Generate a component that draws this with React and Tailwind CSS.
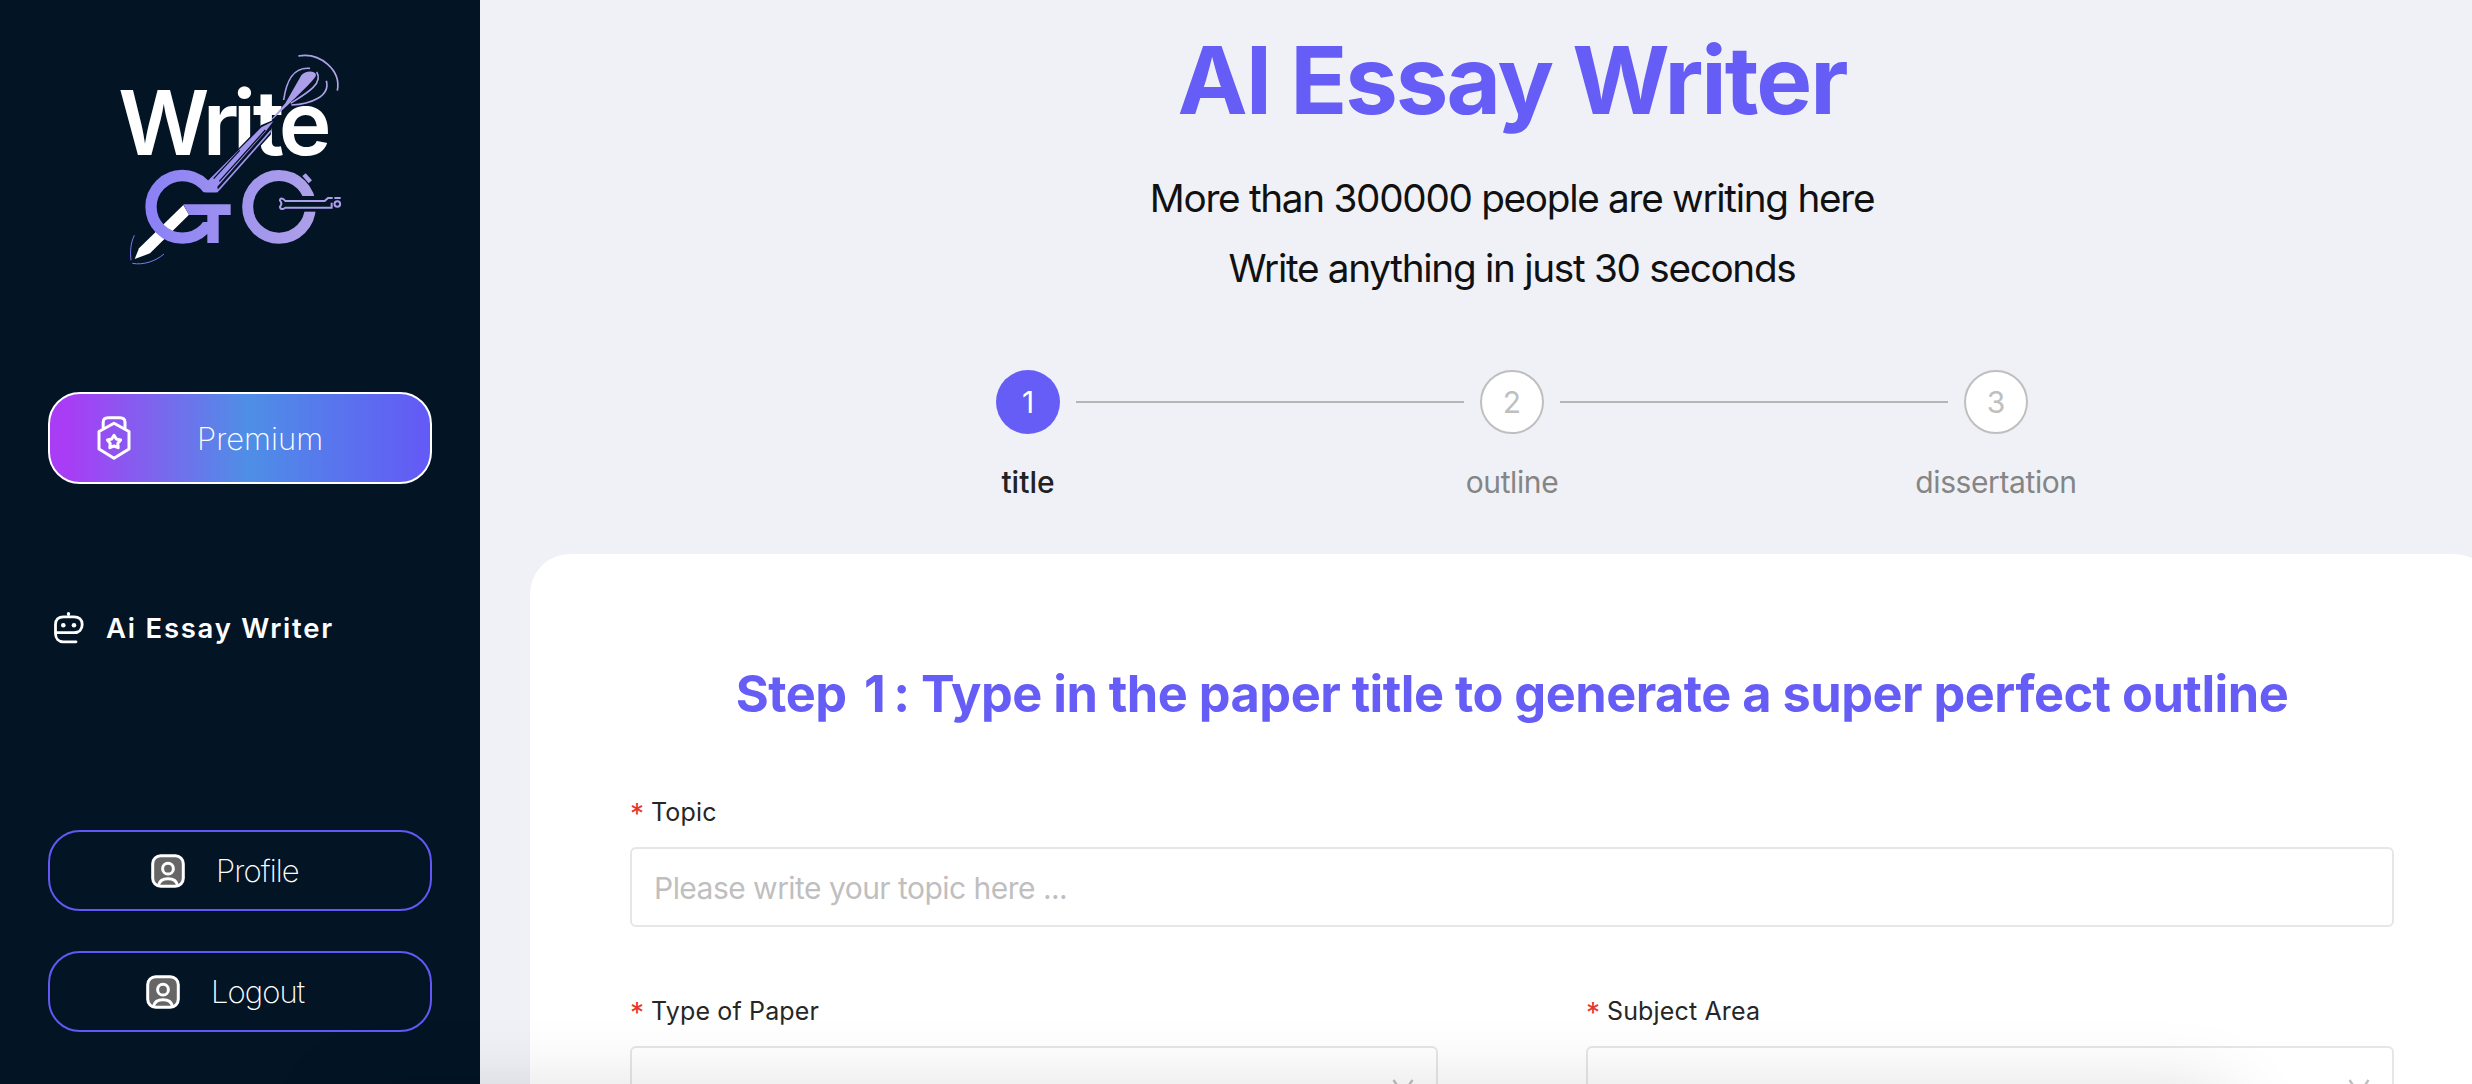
import { useState } from "react";
import clsx from "clsx";

const steps = [
  { id: 1, label: "title" },
  { id: 2, label: "outline" },
  { id: 3, label: "dissertation" },
];

function Logo() {
  return (
    <svg viewBox="0 0 780 720" className="w-[260px] h-[240px]" fill="none">
      <defs>
        <linearGradient id="violet" gradientUnits="userSpaceOnUse" x1="130" y1="0" x2="720" y2="0">
          <stop offset="0" stopColor="#8a7ff6" />
          <stop offset="0.5" stopColor="#a094ee" />
          <stop offset="1" stopColor="#b2a5e6" />
        </linearGradient>
      </defs>
      <text x="55 308 398 458 536" y="345" fill="#fff" fontFamily="Inter, sans-serif" fontWeight="600" fontSize="268">Write</text>

      {/* sword blade */}
      <path d="M250 495L267 524L150 640L104 657L117 625Z" fill="#fff" />

      {/* rings */}
      <circle cx="247" cy="500.500" r="94" stroke="url(#violet)" strokeWidth="34" />
      <circle cx="537" cy="500.500" r="94" stroke="url(#violet)" strokeWidth="33" />
      <rect x="296" y="457" width="64" height="89" fill="#031425" />
      <rect x="598" y="468" width="56" height="47" fill="#031425" />
      <path d="M250 493H392V525H356V609H322V525H267Z" fill="url(#violet)" />

      {/* grip and its stripes */}
      <path d="M326 418L484 255L520 240L512 284L362 452L350 457Z" fill="#031425" />
      <path d="M322 424L484 262L520 244L494 278L352 440L355 457H318Z" fill="url(#violet)" />
      <path d="M341 416L419 331M358 424L496 270" stroke="#031425" strokeWidth="4" />
      <path d="M354 452L513 272" stroke="url(#violet)" strokeWidth="5" />

      {/* feather */}
      <path d="M514 238L556 190L604 106C614 92 644 90 648 104C650 116 576 182 518 238Z" fill="url(#violet)" />
      <g stroke="url(#violet)" strokeWidth="5">
        <path d="M551 180C558 130 575 80 630 85" />
        <path d="M650 96C672 130 620 160 572 190" />
        <path d="M679 122C692 170 630 192 574 195" />
        <path d="M595 48C660 36 724 90 712 152" />
      </g>
      <g stroke="#8077ee" strokeWidth="3">
        <path d="M103 586C92 608 90 635 93 661" />
        <path d="M97 670C130 676 166 664 192 642" />
      </g>

      {/* pommel */}
      <path d="M607 408L617 400L636 421L626 430Z" fill="url(#violet)" />
      <g stroke="#ab9eea" strokeWidth="6">
        <path d="M698 474H684L674 483H556C548 472 539 474 540 482C546 489 546 494 540 500C540 508 550 509 556 503H695V488" />
        <path d="M703 474H722" />
        <circle cx="712" cy="492" r="8.500" />
      </g>
    </svg>
  );
}

function MedalIcon() {
  return (
    <svg viewBox="0 0 34 44" className="w-[34px] h-11" fill="none" stroke="#fff" strokeWidth="3" strokeLinejoin="round" strokeLinecap="round">
      <path d="M6.200 12V6.500C6.200 3.500 8 1.700 11 1.700H23C26 1.700 28 3.500 28 6.500V12" />
      <path d="M17 7.300L32 15.500V33L17 42.200L2 33V15.500Z" />
      <path d="M17 19.300L19.300 23L23.600 24L20.800 27.400L21.200 31.700L17 30L12.800 31.700L13.200 27.400L10.400 24L14.700 23Z" />
    </svg>
  );
}

function RobotIcon() {
  return (
    <svg viewBox="0 0 30 32" className="w-[30px] h-8" fill="none" stroke="#fff" strokeWidth="2.800" strokeLinecap="round">
      <path d="M22 29.800H9.500C4.500 29.800 1.500 26.500 1.500 21.500V12.500C1.500 7.500 4.500 4.800 9.500 4.800H20C25 4.800 28.200 7.700 28.200 12.500S25 20.700 20 20.700H2" />
      <path d="M14.500 4.500V2" strokeWidth="2" />
      <circle cx="14.500" cy="1.700" r="1.700" fill="#fff" stroke="none" />
      <circle cx="9.300" cy="13.200" r="2.300" fill="#fff" stroke="none" />
      <circle cx="20" cy="13.200" r="2.300" fill="#fff" stroke="none" />
    </svg>
  );
}

function UserIcon() {
  return (
    <svg viewBox="0 0 34 34" className="size-[34px]" fill="none" stroke="#fff" strokeWidth="3">
      <rect x="1.700" y="1.700" width="30.600" height="30.600" rx="8" fill="#666" />
      <circle cx="17" cy="14.700" r="5.400" />
      <path d="M7.500 31C8.500 27 12 24.700 17 24.700S25.500 27 26.500 31" />
    </svg>
  );
}

function Label({ children }) {
  return (
    <div className="flex gap-2 h-8 leading-8 text-[25px] tracking-[0.150px] text-[#262626]">
      <span className="w-[13px] pt-0.5 text-[28px] text-[#e8352e]">*</span>
      <span>{children}</span>
    </div>
  );
}

function Select({ label }) {
  return (
    <div className="flex-1">
      <Label>{label}</Label>
      <div className="mt-[19px] h-20 px-[22px] flex items-center justify-end rounded-md border-2 border-[#e6e6e6]">
        <svg viewBox="0 0 22 20" className="w-[22px] h-5 mt-1.5" fill="none" stroke="#bfbfbf" strokeWidth="2.400">
          <path d="M1.500 1L11 15L20.500 1" />
        </svg>
      </div>
    </div>
  );
}

function Sidebar() {
  return (
    <aside className="w-[480px] h-full shrink-0 bg-[#031425] flex flex-col px-12 pt-10 text-white">
      <div className="ml-[52px]">
        <Logo />
      </div>

      <button className="mt-28 h-[92px] shrink-0 flex items-center pl-[47px] rounded-[32px] border-2 border-white bg-[linear-gradient(90deg,#a93cf5_4%,#4e8fe6_52%,#635bf5_98%)]">
        <MedalIcon />
        <span className="ml-[66px] pt-0.5 text-[31px] font-extralight">Premium</span>
      </button>

      <nav className="mt-32 h-8 pl-1.5 flex items-center gap-[22px]">
        <RobotIcon />
        <span className="text-[27.500px] font-semibold tracking-[1.750px] leading-8">Ai Essay Writer</span>
      </nav>

      <div className="mt-[186px] flex flex-col gap-10">
        <button className="h-[81px] pl-[101px] flex items-center rounded-[32px] border-2 border-[#6358f3]">
          <UserIcon />
          <span className="ml-[31px] pt-0.5 text-[31px] font-extralight tracking-[-0.900px]">Profile</span>
        </button>
        <button className="h-[81px] pl-24 flex items-center rounded-[32px] border-2 border-[#6358f3]">
          <UserIcon />
          <span className="ml-[31px] pt-0.5 text-[31px] font-extralight tracking-[-0.900px]">Logout</span>
        </button>
      </div>
    </aside>
  );
}

export default function App() {
  const [current] = useState(1);

  return (
    <div className="relative flex w-full h-[1084px] overflow-hidden bg-[#f0f1f6] font-[Inter,sans-serif]">
      <Sidebar />

      <main className="w-[2064px] shrink-0 px-[50px] pt-6">
        <h1 className="text-center text-[94px] leading-[112px] font-bold text-[#665df6] tracking-[-2.050px]">AI Essay Writer</h1>
        <div className="mt-[27px] text-center text-[38.700px] leading-[70px] tracking-[-1.290px] text-[#111]">
          <p>More than 300000 people are writing here</p>
          <p>Write anything in just 30 seconds</p>
        </div>

        {/* Steps */}
        <div className="mt-[67px] flex justify-center">
          {steps.map((step, i) => (
            <div key={step.id} className="flex">
              {i > 0 && <div className="w-[388px] h-0.5 mt-[31px] -mx-20 bg-[#b5b5b5]" />}
              <div className="w-64 flex flex-col items-center">
                <div
                  className={clsx(
                    "size-16 flex items-center justify-center rounded-full text-[30px]",
                    step.id === current ? "bg-[#665df6] text-white" : "bg-white border-2 border-[#bfbfbf] text-[#bfbfbf]"
                  )}
                >
                  {step.id}
                </div>
                <div className={clsx("mt-6 text-[30px] leading-[48px]", step.id === current ? "font-medium text-[#222]" : "tracking-[-0.400px] text-[#858585]")}>
                  {step.label}
                </div>
              </div>
            </div>
          ))}
        </div>

        {/* Form card */}
        <div className="mt-12 h-[900px] rounded-[40px] bg-white px-[100px] pt-[104px]">
          <h2 className="text-center text-[50.500px] leading-[72px] font-bold tracking-[-0.530px] text-[#665df6]">
            Step <span className="ml-1.5 mr-2">1</span>: Type in the paper title to generate a super perfect outline
          </h2>
          <div className="mt-[66px]">
            <Label>Topic</Label>
            <input
              className="mt-[19px] block w-full h-20 px-[22px] pt-0.5 rounded-md border-2 border-[#e6e6e6] text-[30px] tracking-[-0.530px] placeholder:text-[#bfbfbf]"
              placeholder="Please write your topic here ..."
            />
          </div>
          <div className="mt-[68px] flex gap-[148px]">
            <Select label="Type of Paper" />
            <Select label="Subject Area" />
          </div>
        </div>
      </main>

      {/* floating bar below the fold, only its shadow shows */}
      <div className="absolute left-[340px] top-[1096px] w-[1890px] h-24 rounded-3xl shadow-[0_0_80px_rgba(0,0,0,0.16)]" />
    </div>
  );
}
